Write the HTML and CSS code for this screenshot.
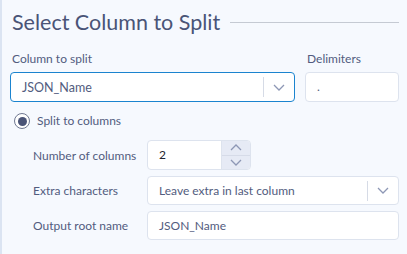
FILE: index.html
```html
<!DOCTYPE html>
<html lang="en">
<head>
    <meta charset="UTF-8">
    <meta name="viewport" content="width=device-width, initial-scale=1.0">
    <title>Select Column to Split</title>
    <link rel="stylesheet" href="styles.css">
</head>
<body>
    <div class="panel">
        <div class="title-row">
            <h2>Select Column to Split</h2>
            <div class="title-line"></div>
        </div>

        <div class="top-row">
            <div class="field">
                <label class="field-label">Column to split</label>
                <div class="select focused">
                    <span class="select-text">JSON_Name</span>
                    <span class="select-sep"></span>
                    <span class="select-arrow">
                        <svg width="12" height="7" viewBox="0 0 12 7"><path d="M1 1l5 5 5-5" fill="none" stroke="#8d97b5" stroke-width="1.3"/></svg>
                    </span>
                </div>
            </div>
            <div class="field">
                <label class="field-label">Delimiters</label>
                <div class="text-input">.</div>
            </div>
        </div>

        <div class="radio-row">
            <span class="radio"><span class="radio-dot"></span></span>
            <span>Split to columns</span>
        </div>

        <div class="options">
            <div class="option">
                <span class="option-label">Number of columns</span>
                <div class="spinner">
                    <span class="spinner-value">2</span>
                    <span class="spinner-buttons">
                        <span class="spin-btn">
                            <svg width="12" height="7" viewBox="0 0 12 7"><path d="M1 6l5-5 5 5" fill="none" stroke="#8d97b5" stroke-width="1.3"/></svg>
                        </span>
                        <span class="spin-btn">
                            <svg width="12" height="7" viewBox="0 0 12 7"><path d="M1 1l5 5 5-5" fill="none" stroke="#8d97b5" stroke-width="1.3"/></svg>
                        </span>
                    </span>
                </div>
            </div>
            <div class="option">
                <span class="option-label">Extra characters</span>
                <div class="select small">
                    <span class="select-text">Leave extra in last column</span>
                    <span class="select-sep"></span>
                    <span class="select-arrow">
                        <svg width="12" height="7" viewBox="0 0 12 7"><path d="M1 1l5 5 5-5" fill="none" stroke="#8d97b5" stroke-width="1.3"/></svg>
                    </span>
                </div>
            </div>
            <div class="option">
                <span class="option-label">Output root name</span>
                <div class="text-input small wide">JSON_Name</div>
            </div>
        </div>
    </div>
</body>
</html>
```

FILE: styles.css
```css
body {
    margin: 0;
    background-color: #f6f9fe;
    border-left: 2px solid #dbe4f2;
    height: 254px;
    box-sizing: border-box;
    font-family: "Segoe UI", Lato, sans-serif;
    font-size: 12px;
    color: #525c7e;
}
.panel {
    padding: 8px 8px 0 8px;
}
.title-row {
    display: flex;
    align-items: center;
    gap: 10px;
}
h2 {
    margin: 0;
    font-size: 21.5px;
    font-weight: 400;
    color: #4a5477;
    line-height: 28px;
    padding-left: 2px;
    white-space: nowrap;
}
.title-line {
    flex: 1;
    height: 1px;
    background-color: #c5cad3;
    margin-top: 1px;
}
.top-row {
    display: grid;
    grid-template-columns: 1fr 94px;
    gap: 10px;
    margin-top: 14px;
}
.field-label {
    display: block;
    padding-left: 2px;
    line-height: 18px;
    margin-bottom: 4px;
}
.select {
    display: flex;
    align-items: center;
    height: 30px;
    box-sizing: border-box;
    background-color: #fff;
    border: 1px solid #dde3ee;
    border-radius: 4px;
}
.select.focused {
    border-color: #1b84cf;
}
.select-text {
    flex: 1;
    padding-left: 11px;
    white-space: nowrap;
}
.select.focused .select-text {
    font-size: 12.5px;
}
.select-sep {
    width: 1px;
    height: 20px;
    background-color: #d6dbe6;
}
.select-arrow {
    width: 30px;
    display: flex;
    justify-content: center;
    align-items: center;
}
.text-input {
    height: 30px;
    box-sizing: border-box;
    background-color: #fff;
    border: 1px solid #dde3ee;
    border-radius: 4px;
    padding-left: 11px;
    line-height: 28px;
}
.radio-row {
    display: flex;
    align-items: center;
    gap: 7px;
    margin-top: 10px;
    padding-left: 4px;
    line-height: 18px;
}
.radio {
    width: 16px;
    height: 16px;
    box-sizing: border-box;
    border: 1.5px solid #6f7891;
    border-radius: 50%;
    display: flex;
    align-items: center;
    justify-content: center;
    background-color: #fff;
}
.radio-dot {
    width: 9px;
    height: 9px;
    border-radius: 50%;
    background-color: #4a5477;
}
.options {
    display: flex;
    flex-direction: column;
    gap: 6px;
    margin-top: 10px;
    padding-left: 23px;
}
.option {
    display: flex;
    align-items: center;
}
.option-label {
    width: 114px;
    flex-shrink: 0;
    white-space: nowrap;
}
.spinner {
    display: flex;
    width: 104px;
    height: 30px;
    box-sizing: border-box;
    background-color: #fff;
    border: 1px solid #dde3ee;
    border-radius: 4px;
    overflow: hidden;
}
.spinner-value {
    flex: 1;
    padding-left: 11px;
    line-height: 28px;
    color: #1f2430;
}
.spinner-buttons {
    width: 28px;
    display: flex;
    flex-direction: column;
    background-color: #e6eaf5;
    border-left: 1px solid #dde3ee;
}
.spin-btn {
    flex: 1;
    display: flex;
    align-items: center;
    justify-content: center;
}
.spin-btn + .spin-btn {
    border-top: 1px solid #d6dbe8;
}
.select.small {
    flex: 1;
    height: 29px;
}
.text-input.wide {
    flex: 1;
    height: 29px;
    line-height: 27px;
}
```
